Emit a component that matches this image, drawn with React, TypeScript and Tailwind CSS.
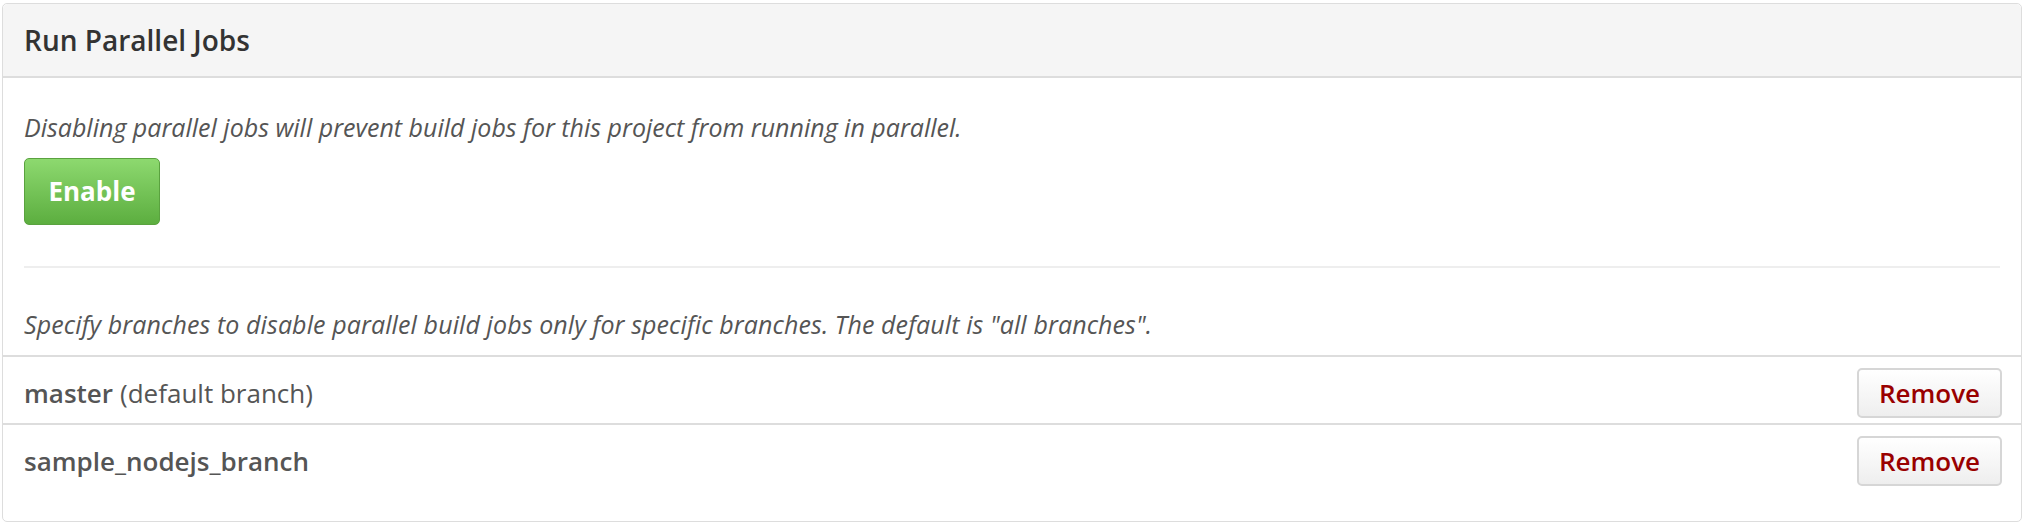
import React from 'react'

const BRANCHES = [
  { name: 'master', note: '(default branch)' },
  { name: 'sample_nodejs_branch', note: '' },
]

export default function App() {
  return (
    <div className="w-[2024px] h-[524px] bg-white px-[2px] pt-[3px] font-['Open_Sans',sans-serif]">
      <div className="border border-[#dddddd] rounded-[5px] h-[519px] flex flex-col">
        <div className="h-[74px] bg-[#f5f5f5] border-b-2 border-[#dddddd] flex items-center px-[21px] rounded-t-[5px]">
          <h3 className="text-[28px] font-semibold text-[#333333]">Run Parallel Jobs</h3>
        </div>

        <div className="px-[21px] pt-[35px]">
          <p className="italic text-[25px] leading-[28px] text-[#555555]">
            Disabling parallel jobs will prevent build jobs for this project from running in parallel.
          </p>
          <button className="mt-[17px] w-[136px] h-[67px] rounded-[5px] border border-[#5aa23f] bg-gradient-to-b from-[#8dd96f] to-[#5cae3f] text-white text-[26px] font-bold">
            Enable
          </button>
          <hr className="mt-[41px] border-t-2 border-[#eeeeee]" />
          <p className="mt-[42px] mb-[17px] italic text-[25px] leading-[28px] tracking-[0.1px] text-[#555555]">
            Specify branches to disable parallel build jobs only for specific branches. The default is "all branches".
          </p>
        </div>

        {BRANCHES.map(b => (
          <div key={b.name} className="border-t-2 border-[#dddddd] h-[68px] pl-[21px] pr-[19px] pt-[11px] flex items-start justify-between">
            <div className="h-[50px] flex items-center text-[26px] text-[#555555]">
              <span className="font-semibold">{b.name}</span>
              {b.note && <span className="ml-[7px]">{b.note}</span>}
            </div>
            <button className="w-[145px] h-[50px] rounded-[5px] border-2 border-[#d6d6d6] bg-gradient-to-b from-[#ffffff] to-[#eeeeee] text-[#990000] text-[26px] font-semibold">
              Remove
            </button>
          </div>
        ))}
      </div>
    </div>
  )
}
